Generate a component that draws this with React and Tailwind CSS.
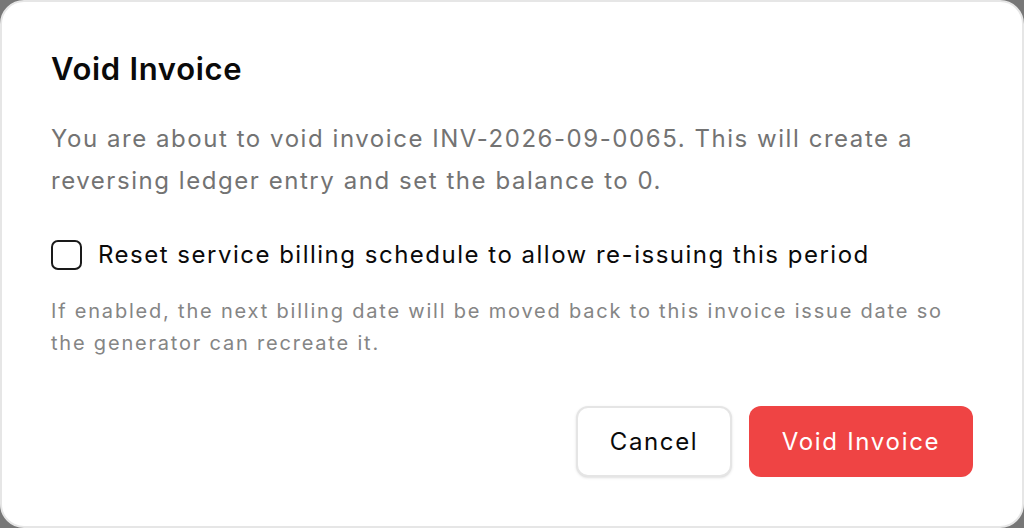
import { useState } from "react";

export default function App() {
  const [reset, setReset] = useState(false);

  return (
    <div className="h-[528px] w-[1024px] bg-[#777777]" style={{ fontFamily: "Inter, 'Noto Sans', sans-serif" }}>
      <div className="flex h-full w-full flex-col rounded-[24px] border-2 border-[#e6e6e6] bg-white px-[49px] pt-[48px]">
        <h2 className="text-[31px] font-semibold leading-[38px] tracking-[0.7px] text-[#0a0a0a]">Void Invoice</h2>
        <p className="mt-[30px] text-[24px] leading-[42px] tracking-[1.55px] text-[#737373]">
          You are about to void invoice INV-2026-09-0065. This will create a reversing ledger entry and set the balance to 0.
        </p>
        <label className="mt-[36px] flex cursor-pointer items-center gap-[16px]">
          <button
            type="button"
            onClick={() => setReset((v) => !v)}
            className="h-[30px] w-[31px] shrink-0 rounded-[7px] border-2 border-[#1a1a1a] bg-white"
          />
          <span className="text-[24px] leading-[34px] tracking-[1.5px] text-[#0a0a0a]">
            Reset service billing schedule to allow re-issuing this period
          </span>
        </label>
        <p className="mt-[23px] text-[20px] leading-[32px] tracking-[1.8px] text-[#858585]">
          If enabled, the next billing date will be moved back to this invoice issue date so the generator can recreate it.
        </p>
        <div className="mt-[47px] flex justify-end gap-[17px]">
          <button
            type="button"
            className="h-[71px] w-[156px] rounded-[12px] border-2 border-[#e5e5e5] bg-white text-[24px] tracking-[1.6px] text-[#0a0a0a] shadow-sm"
          >
            Cancel
          </button>
          <button
            type="button"
            className="h-[71px] w-[224px] rounded-[12px] bg-[#ef4444] text-[24px] tracking-[1.7px] text-white"
          >
            Void Invoice
          </button>
        </div>
      </div>
    </div>
  );
}
